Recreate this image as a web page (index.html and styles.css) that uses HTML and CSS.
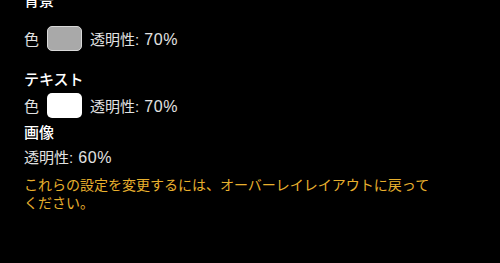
FILE: index.html
```html
<!DOCTYPE html>
<html lang="ja">
<head>
  <meta charset="UTF-8" />
  <title>表示設定</title>
  <meta name="viewport" content="width=device-width, initial-scale=1.0" />
  <link rel="stylesheet" href="styles.css">
</head>
<body>

<div class="panel">
  <!-- 背景 -->
  <div class="section first">
    <div class="heading">背景</div>
    <div class="row">
      <span class="label">色</span>
      <span class="swatch gray"></span>
      <span class="value">透明性: <span class="num">70%</span></span>
    </div>
  </div>

  <!-- テキスト -->
  <div class="section">
    <div class="heading">テキスト</div>
    <div class="row tight">
      <span class="label">色</span>
      <span class="swatch white"></span>
      <span class="value">透明性: <span class="num">70%</span></span>
    </div>
  </div>

  <!-- 画像 -->
  <div class="section image">
    <div class="heading">画像</div>
    <div class="value line">透明性: <span class="num">60%</span></div>
  </div>

  <p class="note">これらの設定を変更するには、オーバーレイレイアウトに戻ってください。</p>
</div>

</body>
</html>
```

FILE: styles.css
```css
* { box-sizing: border-box; }
body {
  margin: 0;
  background: #000;
  font-family: "Liberation Sans", "Noto Sans CJK JP", sans-serif;
  color: #e2e2e2;
  height: 263px;
  overflow: hidden;
}
.panel {
  padding: 0 24px;
  margin-top: -9px;
}
.heading {
  font-size: 15px;
  line-height: 20px;
  font-weight: 500;
  color: #fff;
}
.row {
  display: flex;
  align-items: center;
  margin-top: 15px;
  font-size: 15px;
}
.row.tight {
  margin-top: 3px;
}
.section + .section {
  margin-top: 19px;
}
.section.image {
  margin-top: 5px;
}
.label {
  width: 13px;
  margin-right: 10px;
}
.swatch {
  width: 35px;
  height: 25px;
  border-radius: 5px;
  margin-right: 8px;
}
.swatch.gray {
  background: #a9a9a9;
  border: 1px solid #d8d8d8;
}
.swatch.white {
  background: #fff;
}
.value {
  font-size: 15px;
  word-spacing: 1px;
}
.num {
  font-size: 16px;
  letter-spacing: 0.5px;
}
.line {
  line-height: 20px;
  margin-top: 5px;
}
.note {
  margin: 8px 0 0;
  max-width: 412px;
  font-size: 14px;
  line-height: 18px;
  color: #e8b02e;
}
```
